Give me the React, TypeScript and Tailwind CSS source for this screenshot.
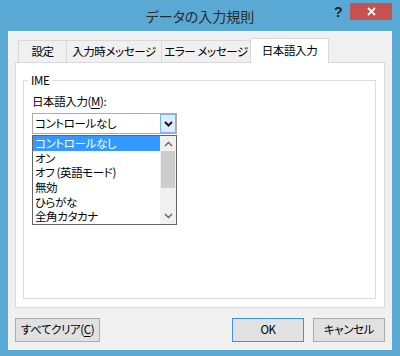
import React from "react";

const Chevron = ({ dir, bold }: { dir: "up" | "down"; bold?: boolean }) => (
  <svg width="9" height="6" viewBox="0 0 9 6" className="block">
    <polyline
      points={dir === "down" ? "1,1 4.5,4.5 8,1" : "1,5 4.5,1.5 8,5"}
      fill="none"
      stroke={bold ? "#1a1a1a" : "#606060"}
      strokeWidth={bold ? 2 : 1.3}
    />
  </svg>
);

const items = ["コントロールなし", "オン", "オフ (英語モード)", "無効", "ひらがな", "全角カタカナ"];

export default function App() {
  return (
    <div className="w-[400px] h-[356px] bg-[#5aa9d5] flex flex-col font-['Noto_Sans_CJK_JP',sans-serif] [font-feature-settings:'palt'] text-[11.5px] tracking-[-0.4px] text-black overflow-hidden">
      {/* title bar */}
      <div className="h-[31px] flex items-start relative">
        <div className="flex-1 text-center text-[14px] tracking-normal text-[#2b2b2b] pt-[6px] leading-[20px]">データの入力規則</div>
        <div className="absolute left-[334px] top-[3px] text-[14px] font-bold text-[#222] leading-[18px] font-['Liberation_Sans',sans-serif]">?</div>
        <div className="absolute left-[350px] top-[3px] w-[42px] h-[17px] bg-[#c75050] flex items-center justify-center">
          <svg width="9" height="9" viewBox="0 0 9 9">
            <path d="M1,1 L8,8 M8,1 L1,8" stroke="#fff" strokeWidth="1.8" />
          </svg>
        </div>
      </div>
      {/* client */}
      <div className="mx-[8px] h-[319px] bg-[#f0f0f0] flex flex-col px-[7px] pt-[7px]">
        {/* tabs */}
        <div className="h-[24px] flex items-end pl-[3px] relative z-10 whitespace-nowrap">
          <div className="h-[22px] w-[49px] border border-b-0 border-[#d9d9d9] bg-[#f0f0f0] flex items-center justify-center leading-none">設定</div>
          <div className="h-[22px] w-[96px] -ml-px border border-b-0 border-[#d9d9d9] bg-[#f0f0f0] flex items-center justify-center leading-none">入力時メッセージ</div>
          <div className="h-[22px] w-[90px] -ml-px border border-b-0 border-[#d9d9d9] bg-[#f0f0f0] flex items-center justify-center leading-none">エラー メッセージ</div>
          <div className="h-[25px] w-[79px] -ml-px -mb-px border border-b-0 border-[#d9d9d9] bg-white flex items-center justify-center leading-none pb-[1px]">日本語入力</div>
        </div>
        {/* panel */}
        <div className="h-[246px] border border-[#d9d9d9] bg-white flex flex-col pl-[7px] pr-[8px] pt-[17px] pb-[8px]">
          <div className="flex-1 border border-[#dcdcdc] relative pl-[8px] pt-[12px]">
            <div className="absolute left-[4px] top-[-9px] bg-white px-[3px] leading-[16px]">IME</div>
            <div className="leading-[16px]">
              日本語入力(<span className="underline underline-offset-2">M</span>):
            </div>
            <div className="mt-[4px] w-[145px] h-[21px] border border-[#acacac] bg-white flex items-stretch">
              <div className="flex-1 pl-[2px] flex items-center leading-none">コントロールなし</div>
              <div className="w-[16px] bg-[#dcecfc] border border-[#7eb4ea] flex items-center justify-center">
                <Chevron dir="down" bold />
              </div>
            </div>
            <div className="mt-[1px] w-[145px] h-[90px] border border-[#646464] bg-white flex">
              <div className="flex-1 flex flex-col">
                {items.map((t, i) => (
                  <div
                    key={t}
                    className={
                      "h-[14.6px] flex items-center pl-[2px] leading-[12px] whitespace-nowrap overflow-hidden " +
                      (i === 0 ? "bg-[#3399ff] text-white" : "")
                    }
                  >
                    {t}
                  </div>
                ))}
              </div>
              <div className="w-[16px] bg-[#f0f0f0] flex flex-col items-stretch">
                <div className="h-[15px] flex items-center justify-center">
                  <Chevron dir="up" />
                </div>
                <div className="h-[37px] mx-[1px] bg-[#cdcdcd]" />
                <div className="flex-1" />
                <div className="h-[17px] flex items-center justify-center">
                  <Chevron dir="down" />
                </div>
              </div>
            </div>
          </div>
        </div>
        {/* buttons */}
        <div className="mt-[10px] h-[24px] flex">
          <div className="w-[85px] h-[24px] border border-[#adadad] bg-[#e1e1e1] flex items-center justify-center leading-none">
            すべてクリア(<span className="underline underline-offset-2">C</span>)
          </div>
          <div className="flex-1" />
          <div className="w-[72px] h-[24px] border border-[#3c94e0] bg-[#e1e1e1] flex items-center justify-center leading-none">OK</div>
          <div className="w-[72px] h-[24px] ml-[9px] border border-[#adadad] bg-[#e1e1e1] flex items-center justify-center leading-none">キャンセル</div>
        </div>
      </div>
    </div>
  );
}
